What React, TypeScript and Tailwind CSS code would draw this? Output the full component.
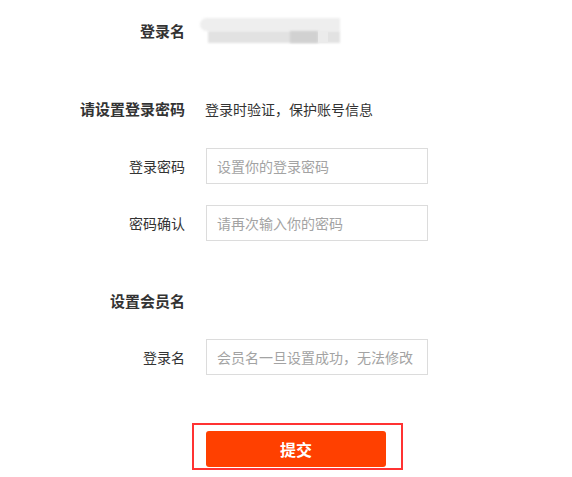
import React from 'react'

const font = { fontFamily: '"Noto Sans CJK SC", "Noto Sans", sans-serif' }

function Row({ label, bold, children, className }: { label: string; bold?: boolean; children?: React.ReactNode; className?: string }) {
  return (
    <div className={`grid grid-cols-[185px_1fr] gap-x-[21px] items-center ${className ?? ''}`}>
      <div className={`text-right whitespace-nowrap ${bold ? 'font-bold text-[15px]' : ''}`}>{label}</div>
      <div className="flex items-center">{children}</div>
    </div>
  )
}

function Field({ placeholder }: { placeholder: string }) {
  return (
    <input
      placeholder={placeholder}
      className="w-[222px] h-[36px] border border-[#dcdcdc] pl-[10px] text-[14px] text-[#333] placeholder:text-[#a3a3a3] outline-none"
      style={font}
    />
  )
}

export default function App() {
  return (
    <div className="w-[572px] h-[477px] bg-white text-[14px] text-[#333] overflow-hidden" style={font}>
      {/* 登录名 (blurred) */}
      <Row label="登录名" bold className="pt-[18px] h-[45px]">
        <div className="relative w-[140px] h-[27px] -ml-[6px]">
          <div className="absolute left-0 top-0 w-[140px] h-[13px] bg-[#eeeeee] rounded-l-full blur-[1px]" />
          <div className="absolute left-[8px] top-[13px] w-[132px] h-[12px] bg-[#e2e2e2] blur-[1px]" />
          <div className="absolute left-[90px] top-[13px] w-[28px] h-[12px] bg-[#d1d1d1] blur-[1px]" />
          <div className="absolute left-[118px] top-[13px] w-[10px] h-[12px] bg-[#ebebeb]" />
        </div>
      </Row>

      <Row label="请设置登录密码" bold className="mt-[53px] h-[20px]">
        <span className="-ml-px">登录时验证，保护账号信息</span>
      </Row>

      <Row label="登录密码" className="mt-[30px]">
        <Field placeholder="设置你的登录密码" />
      </Row>

      <Row label="密码确认" className="mt-[21px]">
        <Field placeholder="请再次输入你的密码" />
      </Row>

      <Row label="设置会员名" bold className="mt-[49px] h-[20px]" />

      <Row label="登录名" className="mt-[29px]">
        <Field placeholder="会员名一旦设置成功，无法修改" />
      </Row>

      <div className="mt-[48px] ml-[192px] w-[211px] h-[47px] border-2 border-[#ff3333] pl-[12px] pt-[6px]">
        <button className="w-[180px] h-[36px] rounded-[3px] bg-[#ff4000] text-white text-[16px] font-bold" style={font}>
          提交
        </button>
      </div>
    </div>
  )
}
